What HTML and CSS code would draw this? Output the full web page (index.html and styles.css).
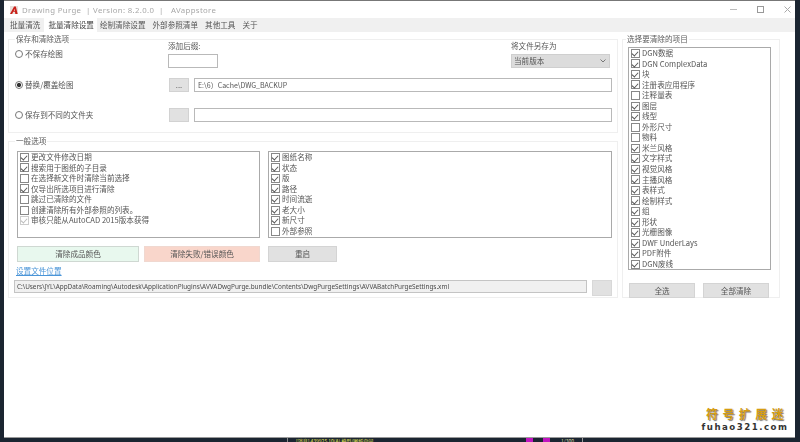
FILE: index.html
```html
<!DOCTYPE html>
<html lang="zh">
<head>
<meta charset="utf-8">
<title>Drawing Purge</title>
<link rel="stylesheet" href="styles.css">
</head>
<body>
<div class="window">
  <header class="titlebar">
    <svg class="logo" width="8" height="8" viewBox="0 0 9 9"><rect width="9" height="9" fill="#eadfda"/><path d="M0 9 L4.6 0.5 L6.6 0.5 L8.6 9 L6 9 L5.6 6.6 L3.6 6.6 L2.4 9 Z" fill="#c8201a"/><path d="M4.2 5.4 L5.4 3 L5.6 5.4 Z" fill="#f3d8d0"/></svg>
    <span class="title">Drawing Purge &nbsp;| Version: 8.2.0.0 &nbsp;| &nbsp; AVappstore</span>
    <div class="controls">
      <svg width="7" height="7" viewBox="0 0 7 7"><path d="M0 3.5H7" stroke="#bbb"/></svg>
      <svg width="7" height="7" viewBox="0 0 7 7"><rect x=".5" y=".5" width="6" height="6" fill="none" stroke="#999"/></svg>
      <svg width="7" height="7" viewBox="0 0 7 7"><path d="M.5 .5L6.5 6.5M6.5 .5L.5 6.5" stroke="#aaa"/></svg>
    </div>
  </header>
  <nav class="tabs">
    <span class="tab">批量清洗</span>
    <span class="tab active">批量清除设置</span>
    <span class="tab">绘制清除设置</span>
    <span class="tab">外部参照清单</span>
    <span class="tab">其他工具</span>
    <span class="tab">关于</span>
  </nav>
  <main class="content">
    <div class="left">
      <section class="group save">
        <span class="legend">保存和清除选项</span>
        <div class="row first">
          <label class="radio-cell high"><i class="radio"></i>不保存绘图</label>
          <div class="suffix">
            <span class="cap">添加后缀:</span>
            <div class="field small"></div>
          </div>
          <div class="saveas">
            <span class="cap">将文件另存为</span>
            <div class="select">当前版本<svg width="6" height="4" viewBox="0 0 6 4"><path d="M.5 .5L3 3L5.5 .5" fill="none" stroke="#777"/></svg></div>
          </div>
        </div>
        <div class="row second">
          <label class="radio-cell"><i class="radio on"></i>替换/覆盖绘图</label>
          <div class="browse">...</div>
          <div class="field wide">E:\6）Cache\DWG_BACKUP</div>
        </div>
        <div class="row third">
          <label class="radio-cell"><i class="radio"></i>保存到不同的文件夹</label>
          <div class="browse"></div>
          <div class="field wide"></div>
        </div>
      </section>
      <section class="group general">
        <span class="legend">一般选项</span>
        <div class="lists">
          <ul class="list opts">
            <li class="on">更改文件修改日期</li>
            <li class="on">搜索用于图纸的子目录</li>
            <li>在选择新文件时清除当前选择</li>
            <li class="on">仅导出所选项目进行清除</li>
            <li>跳过已清除的文件</li>
            <li>创建清除所有外部参照的列表。</li>
            <li class="on dim">审核只能从AutoCAD 2015版本获得</li>
          </ul>
          <ul class="list cols">
            <li class="on">图纸名称</li>
            <li class="on">状态</li>
            <li class="on">版</li>
            <li class="on">路径</li>
            <li class="on">时间流逝</li>
            <li class="on">老大小</li>
            <li class="on">新尺寸</li>
            <li>外部参照</li>
          </ul>
        </div>
        <div class="actions">
          <button class="btn ok">清除成品颜色</button>
          <button class="btn fail">清除失败/错误颜色</button>
          <button class="btn reset">重启</button>
        </div>
        <a class="link">设置文件位置</a>
        <div class="pathrow">
          <div class="path">C:\Users\JYL\AppData\Roaming\Autodesk\ApplicationPlugins\AVVADwgPurge.bundle\Contents\DwgPurgeSettings\AVVABatchPurgeSettings.xml</div>
          <div class="pathbtn"></div>
        </div>
      </section>
    </div>
    <section class="group items">
      <span class="legend">选择要清除的项目</span>
      <ul class="list itemlist">
        <li class="on">DGN数据</li>
        <li class="on">DGN ComplexData</li>
        <li class="on">块</li>
        <li class="on">注册表应用程序</li>
        <li>注释量表</li>
        <li class="on">图层</li>
        <li class="on">线型</li>
        <li>外形尺寸</li>
        <li>物料</li>
        <li class="on">米兰风格</li>
        <li class="on">文字样式</li>
        <li class="on">视觉风格</li>
        <li class="on">主播风格</li>
        <li class="on">表样式</li>
        <li class="on">绘制样式</li>
        <li class="on">组</li>
        <li class="on">形状</li>
        <li class="on">光栅图像</li>
        <li class="on">DWF UnderLays</li>
        <li class="on">PDF附件</li>
        <li class="on">DGN废线</li>
      </ul>
      <div class="itembtns">
        <button class="btn sel">全选</button>
        <button class="btn sel">全部清除</button>
      </div>
    </section>
  </main>
  <div class="watermark">
    <strong>符号扩展迷</strong>
    <span>fuhao321.com</span>
  </div>
</div>
<footer class="strip">
  <span class="s-msg">[消息] 439925 10(A) 模型/图纸空间</span>
  <i class="s-mag"></i><i class="s-mag two"></i>
  <span class="s-scale">1/300</span>
</footer>
</body>
</html>
```

FILE: styles.css
```css
* { box-sizing: border-box; }
html, body { margin: 0; height: 442px; overflow: hidden; }
body {
  background: #1b2531;
  font: 7.6px/10.6px "Noto Sans CJK SC", "Noto Sans", sans-serif;
  color: #555;
  padding: 1px 5px 0 4px;
}
.window {
  position: relative;
  height: 436px;
  background: #fff;
  box-shadow: 0 -1px 0 #777, 0 1px 0 #999;
}
.titlebar { height: 17px; display: flex; align-items: center; padding-left: 6px; }
.logo { flex: none; }
.title { margin-left: 4px; font: 7.8px "Noto Sans", sans-serif; color: #a8a8a8; letter-spacing: .35px; filter: blur(.3px); }
.controls { margin-left: auto; display: flex; gap: 20px; padding-right: 4px; }
.tabs { height: 14px; background: #f0f0f0; display: flex; padding-left: 3px; filter: blur(.3px); }
.tab { padding: 0 3px; margin-right: 1px; line-height: 14px; white-space: nowrap; }
.tab.active { background: #fff; color: #444; margin-right: 0; padding: 0 3px 0 4px; height: 15px; margin-top: -1px; line-height: 15px; }
.content { display: flex; gap: 4px; padding: 7px 0 0 4px; filter: blur(.3px); }
.left { width: 610px; display: flex; flex-direction: column; gap: 8px; }
.group { border: 1px solid #efefef; }
.legend { display: block; width: max-content; height: 11px; margin: -6px 0 0 6px; padding: 0 1px; background: #fff; color: #5c5c5c; }
.save { height: 94px; }
.row { display: flex; }
.first { height: 28px; margin-top: -5px; }
.second { height: 14px; margin-top: 10px; align-items: center; }
.third { height: 14px; margin-top: 16px; align-items: center; }
.radio-cell { width: 159px; flex: none; padding-left: 6px; display: flex; align-items: center; gap: 2px; }
.radio-cell.high { align-self: flex-start; margin-top: 9px; }
.radio { width: 8px; height: 8px; flex: none; border: 1px solid #777; border-radius: 50%; background: #fff; }
.radio.on { background: radial-gradient(circle, #333 0 1.8px, #fff 2.4px); }
.suffix { width: 343px; flex: none; display: flex; flex-direction: column; justify-content: space-between; }
.saveas { width: 100px; flex: none; display: flex; flex-direction: column; justify-content: space-between; }
.cap { display: block; line-height: 11px; }
.field { border: 1px solid #b9b9b9; height: 14px; background: #fff; padding-left: 3px; line-height: 12px; font-size: 7px; }
.small { width: 50px; }
.wide { flex: 1; margin: 0 5px; }
.select { height: 14px; width: 99px; background: #dcdcdc; border: 1px solid #cfcfcf; line-height: 12px; padding: 0 3px 0 2px; display: flex; justify-content: space-between; align-items: center; }
.browse { width: 20px; height: 14px; flex: none; margin-left: 1px; background: #e1e1e1; border: 1px solid #d2d2d2; text-align: center; line-height: 12px; }
.general { height: 157px; }
.lists { display: flex; gap: 8px; padding: 4px 0 0 8px; }
.list { list-style: none; margin: 0; padding: 0 0 0 1px; border: 1px solid #aaa; background: #fff; }
.opts { width: 243px; height: 87px; }
.cols { width: 344px; height: 87px; }
.list li { height: 10.55px; display: flex; align-items: center; gap: 2px; white-space: nowrap; padding-left: 1px; }
.list li::before { content: ""; width: 7px; height: 7px; flex: none; border: 1px solid #888; background: #fff; }
.list li.on { position: relative; }
.list li.on::after {
  content: "";
  position: absolute;
  left: 3px;
  top: 2.1px;
  width: 3px;
  height: 5px;
  border: solid #555;
  border-width: 0 1px 1px 0;
  transform: rotate(42deg);
}
.list li.dim::before { border-color: #ccc; }
.list li.dim::after { border-color: #bbb; }
.actions { display: flex; margin: 8px 0 0 8px; }
.btn { font: inherit; color: #555; padding: 0; height: 16px; line-height: 14px; background: #e1e1e1; border: 1px solid #d4d4d4; }
.ok { width: 122px; background: #e8f8ee; border-color: #cfd8d2; }
.fail { width: 116px; margin-left: 5px; background: #f9d6cb; border-color: #f0d8d0; }
.reset { width: 69px; margin-left: 8px; }
.link { display: block; margin: 3px 0 0 7px; color: #4a95d8; text-decoration: underline; line-height: 11px; }
.pathrow { display: flex; margin: 4px 0 0 5px; }
.path { width: 573px; height: 13px; background: #f0f0f0; border: 1px solid #c4c4c4; font: 6.4px/11px "Noto Sans", sans-serif; padding-left: 2px; white-space: nowrap; overflow: hidden; color: #4a4a4a; }
.pathbtn { width: 20px; height: 16px; margin-left: 5px; background: #e1e1e1; border: 1px solid #d8d8d8; }
.items { width: 158px; height: 259px; }
.items .legend { margin-left: 3px; }
.itemlist { width: 143px; height: 223px; margin: 2px 0 0 5px; }
.itembtns { display: flex; gap: 8px; margin: 13px 0 0 6px; }
.sel { width: 66px; height: 15px; }
.watermark { position: absolute; right: 10px; bottom: 4px; width: 80px; display: flex; flex-direction: column; align-items: center; gap: 2px; color: #d69d12; }
.watermark strong { font: 700 12px/13px "Noto Sans CJK SC", sans-serif; letter-spacing: 4.4px; white-space: nowrap; margin-right: -4px; text-shadow: 1px 1px 1px #777; }
.watermark span { font: 700 8.6px/11px "DejaVu Sans", sans-serif; letter-spacing: 1.5px; color: #333; white-space: nowrap; }
.strip { height: 5px; overflow: hidden; display: flex; margin-left: 283px; border-left: 1px solid #888; }
.s-msg { margin: 0 0 0 8px; width: 230px; flex: none; font-size: 5px; line-height: 8px; color: #e8e85a; }
.s-mag { width: 7px; height: 5px; margin-top: 1px; background: #c015c0; flex: none; }
.s-mag.two { margin-left: 10px; }
.s-scale { margin-left: 11px; padding-right: 8px; border-right: 1px solid #999; font-size: 5px; line-height: 8px; color: #d8d8a0; }
```
